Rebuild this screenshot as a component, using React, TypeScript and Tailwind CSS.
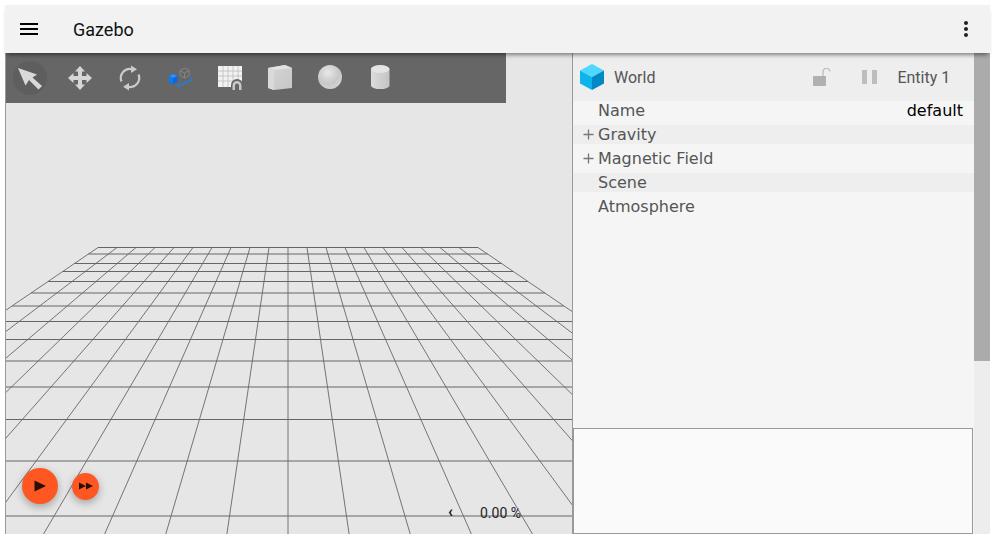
import { useId } from "react";

const GRID_YS = [247.5, 254, 263.5, 271.5, 281.5, 293, 306, 321.5, 339.5, 361, 387, 419.5, 461, 516];
const CENTER_X = 288;
const TOP_SPACING = 19;
const SPREAD = 0.147;

function gridX(k: number, y: number) {
  return CENTER_X + k * (TOP_SPACING + (y - 247.5) * SPREAD);
}

function FloorGrid() {
  const columns = Array.from({ length: 21 }, (_, i) => i - 10);
  return (
    <svg className="absolute inset-0 h-full w-full" viewBox="6 53 566 481">
      {GRID_YS.map((y) => (
        <line key={y} x1={gridX(-10, y)} x2={gridX(10, y)} y1={y} y2={y} stroke="#666" strokeWidth="1" />
      ))}
      {columns.map((k) => (
        <line key={k} x1={gridX(k, 247.5)} x2={gridX(k, 534)} y1={247.5} y2={534} stroke="#666" strokeWidth="0.9" />
      ))}
    </svg>
  );
}

function ArrowIcon() {
  return (
    <svg width="30" height="30" viewBox="0 0 30 30">
      <path d="M3 5 L22 11.5 L17.5 14.5 L27 23 L23.5 26.5 L14 17 L10.5 22.5 Z" fill="#d9d9d9" />
    </svg>
  );
}

function MoveIcon() {
  return (
    <svg width="30" height="30" viewBox="0 0 30 30">
      <path
        d="M15 3 L20 8.5 H17 V13 H21.5 V10 L27 15 L21.5 20 V17 H17 V21.5 H20 L15 27 L10 21.5 H13 V17 H8.5 V20 L3 15 L8.5 10 V13 H13 V8.5 H10 Z"
        fill="#d6d6d6"
      />
    </svg>
  );
}

function RotateIcon() {
  return (
    <svg width="30" height="30" viewBox="0 0 30 30" fill="none">
      <path d="M6.5 18.5 A9 9 0 0 1 17 6.3" stroke="#cccccc" strokeWidth="2.2" />
      <path d="M23.5 11.5 A9 9 0 0 1 13 23.7" stroke="#cccccc" strokeWidth="2.2" />
      <path d="M16 2.5 L22 6.2 L16 10 Z" fill="#cccccc" />
      <path d="M14 20 L8 23.8 L14 27.5 Z" fill="#cccccc" />
    </svg>
  );
}

function SnapIcon() {
  return (
    <svg width="30" height="30" viewBox="0 0 30 30" fill="none">
      <path d="M15 7.5 L19.5 5 L24 7.5 V12.5 L19.5 15 L15 12.5 Z M15 7.5 L19.5 10 L24 7.5 M19.5 10 V15" stroke="#858585" strokeWidth="1" />
      <path d="M4 13 L8 11 L12.5 13 V19 L8 21.5 L4 19 Z" fill="#0a68d8" />
      <path d="M4 13 L8 15 L12.5 13 L8 11 Z" fill="#2f8fff" />
      <path d="M8 15 V21.5 L4 19 V13 Z" fill="#0f7af0" />
      <path d="M11.5 21 L14 23 L27 16.5 L26 14.5" stroke="#1f7fe0" strokeWidth="1.5" />
    </svg>
  );
}

function SnapGridIcon() {
  return (
    <svg width="30" height="30" viewBox="0 0 30 30">
      <rect x="3" y="3" width="24" height="21" fill="#f2f2f2" />
      {[8, 13, 18, 23].map((x) => (
        <line key={x} x1={x} x2={x} y1="3" y2="24" stroke="#bdbdbd" strokeWidth="0.8" />
      ))}
      {[8, 13, 18].map((y) => (
        <line key={y} x1="3" x2="27" y1={y} y2={y} stroke="#bdbdbd" strokeWidth="0.8" />
      ))}
      <path d="M16 28 V22 A6 6 0 0 1 28 22 V28 Z" fill="#666" />
      <path d="M17.5 27 V22.5 A4.5 4.5 0 0 1 26.5 22.5 V27 H24 V22.5 A2 2 0 0 0 20 22.5 V27 Z" fill="#c8c8c8" />
    </svg>
  );
}

function BoxIcon() {
  const id = useId();
  return (
    <svg width="30" height="30" viewBox="0 0 30 30">
      <defs>
        <linearGradient id={id} x1="0" x2="1" y1="0" y2="1">
          <stop offset="0" stopColor="#d6d6d6" />
          <stop offset="1" stopColor="#c6c6c6" />
        </linearGradient>
      </defs>
      <path d="M3 5 L20 2 L27 5 V25 L9 27 L3 25 Z" fill={`url(#${id})`} />
      <path d="M3 5 L20 2 L27 5 L9 7 Z" fill="#e2e2e2" />
      <path d="M3 5 L9 7 V27 L3 25 Z" fill="#dadada" />
    </svg>
  );
}

function SphereIcon() {
  const id = useId();
  return (
    <svg width="30" height="30" viewBox="0 0 30 30">
      <defs>
        <radialGradient id={id} cx="0.42" cy="0.32" r="0.75">
          <stop offset="0" stopColor="#e8e8e8" />
          <stop offset="0.6" stopColor="#c8c8c8" />
          <stop offset="1" stopColor="#d6d6d6" />
        </radialGradient>
      </defs>
      <circle cx="15" cy="14" r="12" fill={`url(#${id})`} />
    </svg>
  );
}

function CylinderIcon() {
  const id = useId();
  return (
    <svg width="30" height="30" viewBox="0 0 30 30">
      <defs>
        <linearGradient id={id} x1="0" x2="1" y1="0" y2="0">
          <stop offset="0" stopColor="#dcdcdc" />
          <stop offset="1" stopColor="#c4c4c4" />
        </linearGradient>
      </defs>
      <path d="M6 6 A9.5 4 0 0 1 24.5 6 V23 A9.5 4 0 0 1 6 23 Z" fill={`url(#${id})`} />
      <ellipse cx="15.25" cy="6" rx="9.25" ry="4" fill="#e4e4e4" />
    </svg>
  );
}

function Toolbar() {
  const icons = [MoveIcon, RotateIcon, SnapIcon, SnapGridIcon, BoxIcon, SphereIcon, CylinderIcon];
  return (
    <div className="absolute -left-px top-0 flex h-[50px] w-[501px] items-center bg-[#666666]">
      <div className="flex h-[50px] w-[50px] items-center justify-center">
        <div className="flex h-[34px] w-[34px] items-center justify-center rounded-full bg-[#5e5e5e]">
          <ArrowIcon />
        </div>
      </div>
      {icons.map((Icon, i) => (
        <div key={i} className="flex h-[50px] w-[50px] items-center justify-center">
          <Icon />
        </div>
      ))}
    </div>
  );
}

function CubeIcon() {
  return (
    <svg width="24" height="26" viewBox="0 0 24 26">
      <path d="M12 0 L24 6.5 L12 13 L0 6.5 Z" fill="#4dd9ff" />
      <path d="M0 6.5 L12 13 V26 L0 19.5 Z" fill="#0db4ec" />
      <path d="M24 6.5 L12 13 V26 L24 19.5 Z" fill="#0288c4" />
    </svg>
  );
}

function PropertyRow({ label, expandable, value, striped }: { label: string; expandable?: boolean; value?: string; striped?: boolean }) {
  return (
    <div className={`flex h-[19px] items-center pr-[11px] ${striped ? "bg-[#eeeeee]" : ""}`}>
      <div className="flex w-[25px] justify-end pr-[4px]">
        {expandable && (
          <svg width="11" height="11" viewBox="0 0 11 11">
            <path d="M5.5 0.5 V10.5 M0.5 5.5 H10.5" stroke="#777777" strokeWidth="1.3" />
          </svg>
        )}
      </div>
      <span className="flex-1 font-['DejaVu_Sans',sans-serif] text-[16px] leading-[19px] text-[#555555]">{label}</span>
      {value && <span className="font-['DejaVu_Sans',sans-serif] text-[16px] leading-[19px] text-black">{value}</span>}
    </div>
  );
}

export default function App() {
  return (
    <div className="flex h-[543px] w-[999px] flex-col bg-white pb-[9px] pl-[5px] pr-[9px] pt-[5px] font-['Roboto',sans-serif]">
      {/* TOP BAR */}
      <header className="relative z-10 flex h-12 shrink-0 items-center justify-between bg-[#f2f2f2] pl-3 pr-3 shadow-[0_4px_4px_-2px_rgba(0,0,0,0.45)]">
        <div className="flex items-center">
          <svg width="24" height="24" viewBox="0 0 24 24" fill="#000">
            <path d="M3 18h18v-2H3v2zm0-5h18v-2H3v2zm0-7v2h18V6H3z" />
          </svg>
          <span className="ml-[32px] text-[18px] text-[#111]">Gazebo</span>
        </div>
        <svg width="24" height="24" viewBox="0 0 24 24" fill="#222">
          <path d="M12 8c1.1 0 2-.9 2-2s-.9-2-2-2-2 .9-2 2 .9 2 2 2zm0 2c-1.1 0-2 .9-2 2s.9 2 2 2 2-.9 2-2-.9-2-2-2zm0 6c-1.1 0-2 .9-2 2s.9 2 2 2 2-.9 2-2-.9-2-2-2z" />
        </svg>
      </header>

      <div className="flex min-h-0 flex-1">
        {/* 3D VIEW */}
        <div className="relative w-[568px] shrink-0 overflow-hidden border-x border-[#999999] bg-[#e6e6e6]">
          <FloorGrid />
          <Toolbar />

          <div className="absolute left-[16px] top-[415px] flex items-center gap-[14px]">
            <button className="flex h-9 w-9 items-center justify-center rounded-full bg-[#ff5722] shadow-[0_3px_8px_rgba(0,0,0,0.3)]">
              <svg width="12" height="12" viewBox="0 0 12 12">
                <path d="M0.5 0.5 L12 6 L0.5 11.5 Z" fill="#2a0f06" />
              </svg>
            </button>
            <button className="flex h-[27px] w-[27px] items-center justify-center rounded-full bg-[#ff5722] shadow-[0_3px_8px_rgba(0,0,0,0.3)]">
              <svg width="14" height="8" viewBox="0 0 14 8">
                <path d="M0 0.5 L7 4 L0 7.5 Z M7 0.5 L14 4 L7 7.5 Z" fill="#2a0f06" />
              </svg>
            </button>
          </div>

          <span className="absolute left-[442px] top-[449px] text-[16px] font-bold leading-5 text-[#111]">‹</span>
          <span className="absolute left-[474px] top-[450px] text-[14px] leading-5 text-[#222]">0.00 %</span>
        </div>

        {/* SIDE PANEL */}
        <div className="flex min-w-0 flex-1">
          <div className="flex w-[401px] flex-col justify-between bg-[#f5f5f5]">
            <div className="flex flex-col">
              <div className="flex h-12 items-center bg-[#eeeeee] pl-[7px] text-[#555555]">
                <CubeIcon />
                <span className="ml-[10px] pt-[2px] text-[16px]">World</span>
                <svg className="ml-[158px]" width="18" height="19" viewBox="0 0 18 19">
                  <rect x="0" y="8" width="13" height="10" rx="1" fill="#b0b0b0" />
                  <path d="M10 8 V4 A3.5 3.5 0 0 1 17 3.5" fill="none" stroke="#c0c0c0" strokeWidth="1.4" />
                </svg>
                <svg className="ml-[31px]" width="16" height="14" viewBox="0 0 16 14">
                  <rect x="0" y="0" width="5" height="14" fill="#bdbdbd" />
                  <rect x="10" y="0" width="5" height="14" fill="#bdbdbd" />
                </svg>
                <span className="ml-[19px] pt-[2px] text-[16px]">Entity 1</span>
              </div>
              <div className="flex flex-col gap-[5px]">
                <PropertyRow label="Name" value="default" />
                <PropertyRow label="Gravity" expandable striped />
                <PropertyRow label="Magnetic Field" expandable />
                <PropertyRow label="Scene" striped />
                <PropertyRow label="Atmosphere" />
              </div>
            </div>
            <div className="mr-px h-[106px] border border-[#999999] bg-[#fafafa]" />
          </div>

          {/* SCROLLBAR */}
          <div className="flex-1 bg-[#ededed]">
            <div className="h-[308px] bg-[#ababab]" />
          </div>
        </div>
      </div>
    </div>
  );
}
